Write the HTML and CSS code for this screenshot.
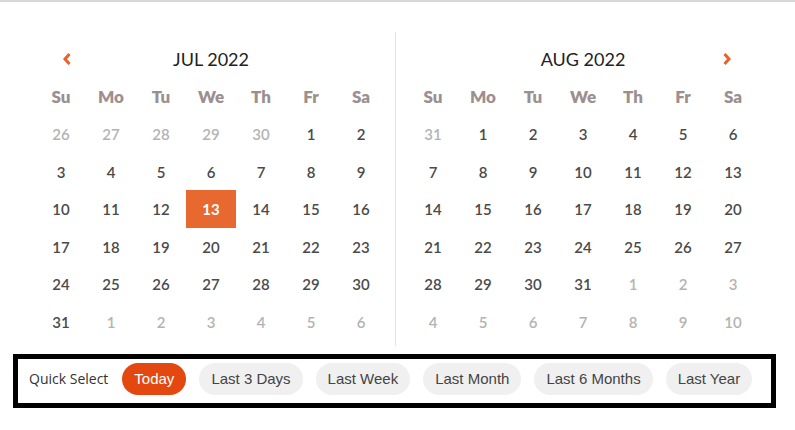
FILE: index.html
```html
<!DOCTYPE html>
<html lang="en">
<head>
<meta charset="UTF-8">
<meta name="viewport" content="width=device-width, initial-scale=1.0">
<title>Date Range Picker</title>
<link rel="stylesheet" href="styles.css">
</head>
<body>

<div class="picker">
    <div class="calendars">
        <div class="month month-left">
            <div class="month-head">
                <span class="nav"><svg width="10" height="14" viewBox="0 0 10 14"><polyline points="7.5,2 3,7 7.5,12" fill="none" stroke="#e8632b" stroke-width="3"/></svg></span>
                <span class="month-title">JUL 2022</span>
                <span class="nav"></span>
            </div>
            <div class="days" id="jul"></div>
        </div>
        <div class="month month-right">
            <div class="month-head">
                <span class="nav"></span>
                <span class="month-title">AUG 2022</span>
                <span class="nav"><svg width="10" height="14" viewBox="0 0 10 14"><polyline points="2.5,2 7,7 2.5,12" fill="none" stroke="#e8632b" stroke-width="3"/></svg></span>
            </div>
            <div class="days" id="aug"></div>
        </div>
    </div>

    <div class="quick">
        <span class="quick-label">Quick Select</span>
        <button class="pill active">Today</button>
        <button class="pill">Last 3 Days</button>
        <button class="pill">Last Week</button>
        <button class="pill">Last Month</button>
        <button class="pill">Last 6 Months</button>
        <button class="pill">Last Year</button>
    </div>
</div>

<script>
    const weekdays = ['Su', 'Mo', 'Tu', 'We', 'Th', 'Fr', 'Sa'];

    // Build one month grid: days before/after the month are muted
    function renderMonth(id, prevTail, daysInMonth, selected) {
        const grid = document.getElementById(id);
        weekdays.forEach(d => {
            const el = document.createElement('div');
            el.className = 'weekday';
            el.textContent = d;
            grid.appendChild(el);
        });
        const cells = [];
        prevTail.forEach(n => cells.push({ n: n, muted: true }));
        for (let i = 1; i <= daysInMonth; i++) cells.push({ n: i, muted: false });
        let next = 1;
        while (cells.length < 42) cells.push({ n: next++, muted: true });
        cells.forEach(c => {
            const el = document.createElement('div');
            el.className = 'day';
            if (c.muted) el.classList.add('muted');
            if (!c.muted && c.n === selected) el.classList.add('selected');
            el.textContent = c.n;
            grid.appendChild(el);
        });
    }

    renderMonth('jul', [26, 27, 28, 29, 30], 31, 13);
    renderMonth('aug', [31], 31, null);
</script>

</body>
</html>
```

FILE: styles.css
```css
body {
    margin: 0;
    background-color: #FFFFFF;
    border-top: 2px solid #D9D9D9;
}
.picker {
    padding-top: 30px;
}
/* Two month calendars side by side */
.calendars {
    display: flex;
    padding-left: 36px;
    font-family: 'Lato', sans-serif;
}
.month {
    width: 350px;
    padding-top: 8px;
    padding-bottom: 5px;
}
.month-left {
    padding-right: 9px;
    border-right: 1px solid #E2E2E2;
}
.month-right {
    padding-left: 12px;
}
.month-head {
    display: flex;
    align-items: center;
    height: 37.6px;
}
.nav {
    width: 62px;
    display: flex;
    justify-content: center;
    align-items: center;
}
.month-title {
    flex: 1;
    text-align: center;
    font-size: 18px;
    color: #222222;
}
.days {
    display: grid;
    grid-template-columns: repeat(7, 50px);
    grid-auto-rows: 37.6px;
}
.weekday,
.day {
    display: flex;
    justify-content: center;
    align-items: center;
}
.weekday {
    font-size: 17px;
    font-weight: 800;
    color: #9C8F8F;
}
.day {
    font-size: 15px;
    font-weight: 600;
    color: #4A4A4A;
}
.day.muted {
    color: #B3B3B3;
}
.day.selected {
    background-color: #E8692F;
    color: #FFFFFF;
    font-weight: bold;
}
/* Quick select bar */
.quick {
    display: flex;
    align-items: center;
    width: 763px;
    height: 54px;
    box-sizing: border-box;
    margin: 8px 0 0 13px;
    padding: 0 0 4px 11px;
    border: 5px solid #000000;
    white-space: nowrap;
}
.quick-label {
    flex-shrink: 0;
    font-family: 'Open Sans', sans-serif;
    font-size: 14px;
    color: #333333;
    margin-right: 14px;
}
.pill {
    flex-shrink: 0;
    height: 32px;
    padding: 0 12px;
    margin-right: 13px;
    border: none;
    border-radius: 16px;
    background-color: #F0F0F0;
    color: #444444;
    font-family: 'Liberation Sans', sans-serif;
    font-size: 15px;
    cursor: pointer;
}
.pill.active {
    background-color: #E2480F;
    color: #FFFFFF;
}
```
